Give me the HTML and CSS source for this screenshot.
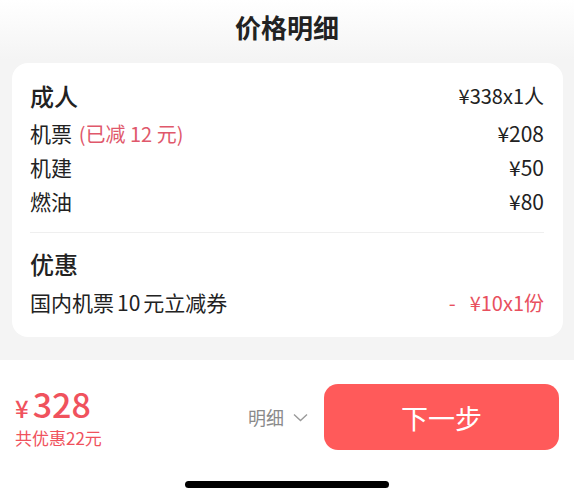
FILE: index.html
```html
<!DOCTYPE html>
<html lang="zh-CN">
<head>
<meta charset="UTF-8">
<title>价格明细</title>
<link rel="stylesheet" href="styles.css">
</head>
<body>

<div class="sheet">
    <header class="title">价格明细</header>

    <!-- 明细卡片 -->
    <div class="card">
        <div class="head-row">
            <span class="head">成人</span>
            <span class="head-val">¥338x1人</span>
        </div>
        <div class="row first">
            <span>机票 <em class="cut">(已减 12 元)</em></span>
            <span>¥208</span>
        </div>
        <div class="row">
            <span>机建</span>
            <span>¥50</span>
        </div>
        <div class="row">
            <span>燃油</span>
            <span>¥80</span>
        </div>

        <hr class="line">

        <div class="head-row">
            <span class="head">优惠</span>
        </div>
        <div class="row coupon">
            <span>国内机票<span class="num">10</span>元立减券</span>
            <span class="minus"><span class="dash">-</span>¥10x1份</span>
        </div>
    </div>
</div>

<!-- 底部栏 -->
<footer class="bar">
    <div class="total">
        <div class="price"><span class="yen">¥</span>328</div>
        <div class="saved">共优惠22元</div>
    </div>
    <div class="detail">
        明细
        <svg width="15" height="9" viewBox="0 0 15 9"><path d="M1 1.5 L7.5 7.5 L14 1.5" fill="none" stroke="#9a9a9a" stroke-width="1.4"/></svg>
    </div>
    <button class="next">下一步</button>
</footer>
<div class="home"></div>

</body>
</html>
```

FILE: styles.css
```css
body {
    font-family: "Noto Sans CJK SC", "Noto Sans", sans-serif;
    margin: 0;
    width: 574px;
    height: 500px;
    overflow: hidden;
    background: #fff;
    color: #222;
    position: relative;
}

.sheet {
    background: linear-gradient(#ffffff 0px, #f4f4f4 60px, #f4f4f4 100%);
    padding-bottom: 23px;
}

.title {
    height: 63px;
    line-height: 54px;
    text-align: center;
    font-size: 26px;
    font-weight: bold;
    color: #222;
}

/* CARD */
.card {
    margin: 0 11px 0 12px;
    background: white;
    border-radius: 16px;
    padding: 17px 19px 18px 18px;
}

.head-row {
    display: flex;
    justify-content: space-between;
    align-items: center;
    height: 30px;
}

.head {
    font-size: 24px;
    font-weight: 500;
}

.head-val {
    font-size: 20px;
}

.row {
    display: flex;
    justify-content: space-between;
    align-items: center;
    height: 34px;
    font-size: 21px;
    color: #222;
}

.row.first { margin-top: 6px; }
.row.coupon { margin-top: 7px; }

.cut {
    font-style: normal;
    color: #e0586b;
    font-size: 20px;
    margin-left: 2px;
}

.num { margin: 0 3px; }

.minus {
    color: #e8505e;
    font-size: 20px;
}

.dash { margin-right: 14px; }

.line {
    border: none;
    border-top: 1px solid #efefef;
    margin: 14px 0 15px 0;
}

/* BOTTOM BAR */
.bar {
    display: flex;
    align-items: center;
    height: 66px;
    padding: 24px 15px 0 15px;
}

.total {
    flex: 1;
    color: #f0525d;
    align-self: flex-start;
}

.price {
    font-size: 34px;
    line-height: 36px;
    font-weight: 500;
    margin-top: 2px;
}

.yen {
    font-size: 24px;
    margin-right: 4px;
}

.saved {
    font-size: 17px;
    line-height: 24px;
}

.detail {
    font-size: 18px;
    color: #8a8a8a;
    display: flex;
    align-items: center;
    gap: 9px;
    margin-right: 16px;
}

.next {
    width: 235px;
    height: 66px;
    border: none;
    border-radius: 14px;
    background: #ff5a5a;
    color: white;
    font-family: inherit;
    font-size: 27px;
}

.home {
    position: absolute;
    left: 185px;
    top: 481px;
    width: 204px;
    height: 7px;
    border-radius: 4px;
    background: #000;
}
```
